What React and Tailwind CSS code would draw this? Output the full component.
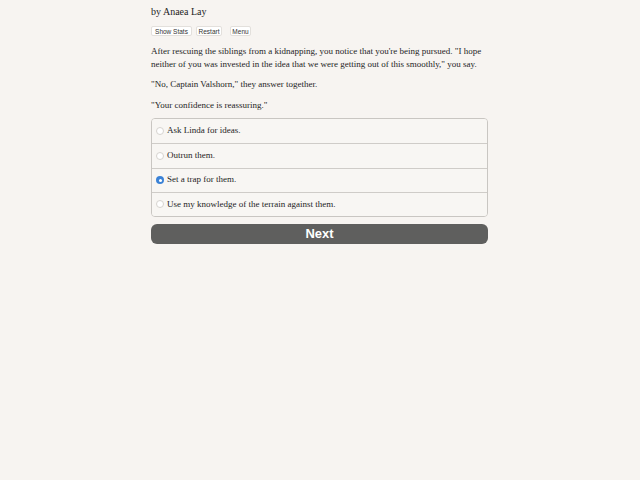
import { useState } from 'react';

const choices = [
  'Ask Linda for ideas.',
  'Outrun them.',
  'Set a trap for them.',
  'Use my knowledge of the terrain against them.',
];

function Radio({ checked }) {
  return checked ? (
    <span className="w-[8px] h-[8px] rounded-full bg-[#3b82d6] flex items-center justify-center shrink-0">
      <span className="w-[3px] h-[3px] rounded-full bg-white" />
    </span>
  ) : (
    <span className="w-[8px] h-[8px] rounded-full border border-[#d6d3cf] bg-white shrink-0" />
  );
}

export default function App() {
  const [selected, setSelected] = useState(2);

  return (
    <div className="min-h-[480px] bg-[#f7f4f1] font-['Liberation_Serif',serif] text-[#1e1e1e]">
      <div className="w-[337px] ml-[151px] pt-[4px]">
        <div className="text-[10px] leading-[15px]">by Anaea Lay</div>

        <div className="flex mt-[7px] font-['Liberation_Sans',sans-serif] text-[6.5px] text-[#333]">
          <button className="w-[41px] h-[10px] leading-[9px] bg-white border border-[#e3e0dc] rounded-[2px]">Show Stats</button>
          <button className="w-[26px] h-[10px] leading-[9px] bg-white border border-[#e3e0dc] rounded-[2px] ml-[4px]">Restart</button>
          <button className="w-[21px] h-[10px] leading-[9px] bg-white border border-[#e3e0dc] rounded-[2px] ml-[8px]">Menu</button>
        </div>

        <div className="text-[9px] leading-[12.5px] mt-[9px] flex flex-col gap-[8px]">
          <p>
            After rescuing the siblings from a kidnapping, you notice that you're being pursued. "I hope
            <br />
            neither of you was invested in the idea that we were getting out of this smoothly," you say.
          </p>
          <p>"No, Captain Valshorn," they answer together.</p>
          <p>"Your confidence is reassuring."</p>
        </div>

        <div className="mt-[7px] border border-[#c9c6c2] rounded-[4px] overflow-hidden text-[9px]">
          {choices.map((c, i) => (
            <div
              key={c}
              onClick={() => setSelected(i)}
              className={`h-[24.25px] flex items-center gap-[3px] pl-[4px] bg-[#f8f6f3] ${i > 0 ? 'border-t border-[#cfccc8]' : ''}`}
            >
              <Radio checked={selected === i} />
              <span>{c}</span>
            </div>
          ))}
        </div>

        <button className="mt-[7px] w-full h-[20px] rounded-[6px] bg-[#5f5f5e] text-white font-['Liberation_Sans',sans-serif] font-bold text-[13px] leading-[20px]">
          Next
        </button>
      </div>
    </div>
  );
}
